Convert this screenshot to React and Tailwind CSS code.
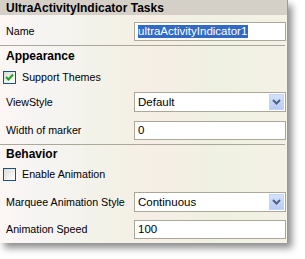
import React from "react";

const font = { fontFamily: '"Liberation Sans", Arial, sans-serif' };

const TextBox = ({ value, selected }) => (
  <div className="w-[152px] h-[19px] border border-[#aca899] bg-white flex items-center pl-[3px] text-[11.5px] text-black">
    {selected ? (
      <span className="bg-[#316ac5] text-white leading-[13px] pr-px">{value}</span>
    ) : (
      <span className="leading-[13px]">{value}</span>
    )}
  </div>
);

const Select = ({ value }) => (
  <div className="w-[152px] h-[20px] border border-[#aca899] bg-white flex items-center pl-[3px] pr-px text-[11.5px] text-black">
    <span className="flex-1 leading-[13px]">{value}</span>
    <div className="w-[15px] h-[16px] bg-gradient-to-b from-[#d6e2fb] to-[#b7cbf6] border border-[#c3d3fd] flex items-center justify-center">
      <svg width="9" height="6" viewBox="0 0 9 6">
        <path d="M1 1 L4.5 4.5 L8 1" fill="none" stroke="#4d6185" strokeWidth="2" />
      </svg>
    </div>
  </div>
);

const Check = ({ checked }) => (
  <div className="w-[13px] h-[13px] border border-[#1c5180] bg-gradient-to-br from-[#dcdcd7] to-white flex items-center justify-center">
    {checked && (
      <svg width="9" height="9" viewBox="0 0 9 9">
        <path d="M1 4 L3.5 6.5 L8 1.5" fill="none" stroke="#21a121" strokeWidth="2" />
      </svg>
    )}
  </div>
);

const Row = ({ label, children, className = "" }) => (
  <div className={`flex items-center pl-[6px] ${className}`}>
    <span className="w-[128px] text-[10.7px] leading-[13px] text-black">{label}</span>
    {children}
  </div>
);

const Separator = ({ className = "" }) => (
  <div className={`h-px bg-[#aca899] mr-[2px] ${className}`} />
);

const Header = ({ children, className = "" }) => (
  <div className={`pl-[6px] text-[12px] leading-[13px] font-bold text-black ${className}`}>
    {children}
  </div>
);

const CheckRow = ({ label, checked, className = "" }) => (
  <div className={`flex items-center pl-[3px] gap-[6px] ${className}`}>
    <Check checked={checked} />
    <span className="text-[10.7px] leading-[13px] text-black">{label}</span>
  </div>
);

export default function App() {
  return (
    <div className="w-[305px] h-[259px] bg-white overflow-hidden" style={font}>
      <div className="w-[288px] pb-[4px] border-r border-[#9d9a8d] bg-[linear-gradient(90deg,#fdf6f5_0%,#f5f4f3_15%,#f3f2e8_35%,#f6eee5_55%,#eff1e2_75%,#f4f1e6_100%)] shadow-[4px_5px_7px_rgba(0,0,0,0.45)]">
        <div className="h-[15px] bg-[#d4d0c8] flex items-center pl-[6px] text-[12px] font-bold text-black">
          UltraActivityIndicator Tasks
        </div>

        <Row label="Name" className="mt-[7px]">
          <TextBox value="ultraActivityIndicator1" selected />
        </Row>
        <Separator className="mt-[4px]" />

        <Header className="mt-[4px]">Appearance</Header>
        <CheckRow label="Support Themes" checked className="mt-[8px]" />
        <Row label="ViewStyle" className="mt-[8px]">
          <Select value="Default" />
        </Row>
        <Row label="Width of marker" className="mt-[9px]">
          <TextBox value="0" />
        </Row>
        <Separator className="mt-[4px]" />

        <Header className="mt-[3px]">Behavior</Header>
        <CheckRow label="Enable Animation" className="mt-[7px]" />
        <Row label="Marquee Animation Style" className="mt-[11px]">
          <Select value="Continuous" />
        </Row>
        <Row label="Animation Speed" className="mt-[8px]">
          <TextBox value="100" />
        </Row>
      </div>
    </div>
  );
}
